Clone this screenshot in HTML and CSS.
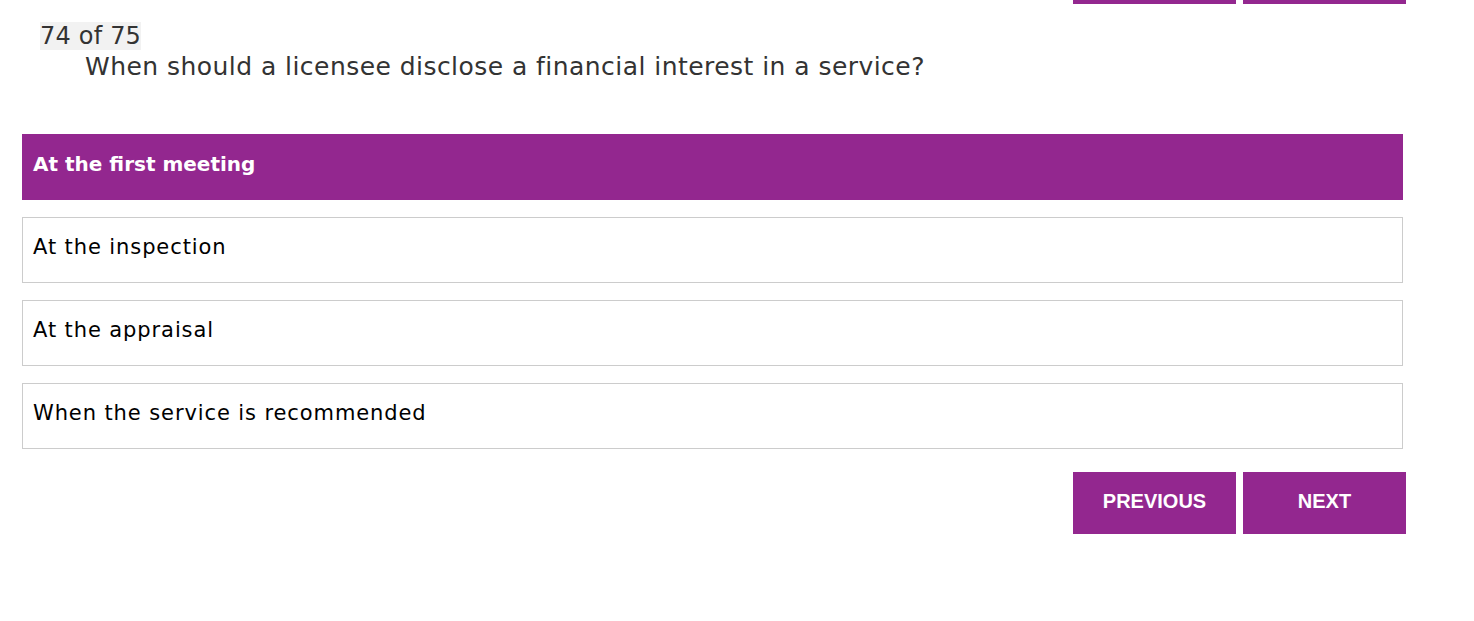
FILE: index.html
```html
<!DOCTYPE html>
<html lang="en">
<head>
<meta charset="utf-8">
<title>Quiz</title>
<link rel="stylesheet" href="styles.css">
</head>
<body>
<div class="page">
  <div class="nav nav-top">
    <button class="btn" aria-label="Previous"></button>
    <button class="btn" aria-label="Next"></button>
  </div>
  <div class="counter-line"><span class="counter">74 of 75</span></div>
  <div class="question">When should a licensee disclose a financial interest in a service?</div>
  <ul class="options">
    <li class="option selected">At the first meeting</li>
    <li class="option">At the inspection</li>
    <li class="option">At the appraisal</li>
    <li class="option">When the service is recommended</li>
  </ul>
  <div class="nav nav-bottom">
    <button class="btn">PREVIOUS</button>
    <button class="btn">NEXT</button>
  </div>
</div>
</body>
</html>
```
FILE: styles.css
```css
body {
  margin: 0;
  background: #ffffff;
  font-family: "DejaVu Sans", "Liberation Sans", sans-serif;
}

.page {
  width: 1384px;
  margin-left: 22px;
}

.nav {
  display: flex;
  justify-content: flex-end;
  gap: 7px;
}

.nav-top {
  height: 4px;
  overflow: hidden;
  align-items: flex-end;
}

.nav-bottom {
  margin-top: 23px;
}

.btn {
  flex: none;
  width: 163px;
  height: 62px;
  border: 0;
  padding: 0 0 3px;
  background: #93278f;
  color: #ffffff;
  font-family: "Liberation Sans", Arial, sans-serif;
  font-weight: bold;
  font-size: 20px;
}

.counter-line {
  margin-top: 18px;
  padding-left: 18px;
  font-size: 24px;
  line-height: 29px;
  color: #333333;
}

.counter {
  background: #f2f2f2;
  letter-spacing: 0.2px;
}

.question {
  padding: 1px 0 0 63px;
  font-size: 25px;
  line-height: 29px;
  color: #333333;
  letter-spacing: 0.45px;
}

.options {
  list-style: none;
  margin: 53px 3px 0 0;
  padding: 0;
}

.option {
  box-sizing: border-box;
  height: 66px;
  margin-bottom: 17px;
  padding: 17px 10px 0;
  border: 1px solid #cccccc;
  font-size: 21px;
  line-height: 24px;
  color: #000000;
  letter-spacing: 0.9px;
}

.option:last-child {
  margin-bottom: 0;
}

.option.selected {
  background: #93278f;
  border-color: #93278f;
  color: #ffffff;
  font-size: 20px;
  font-weight: bold;
  letter-spacing: 0;
}
```
